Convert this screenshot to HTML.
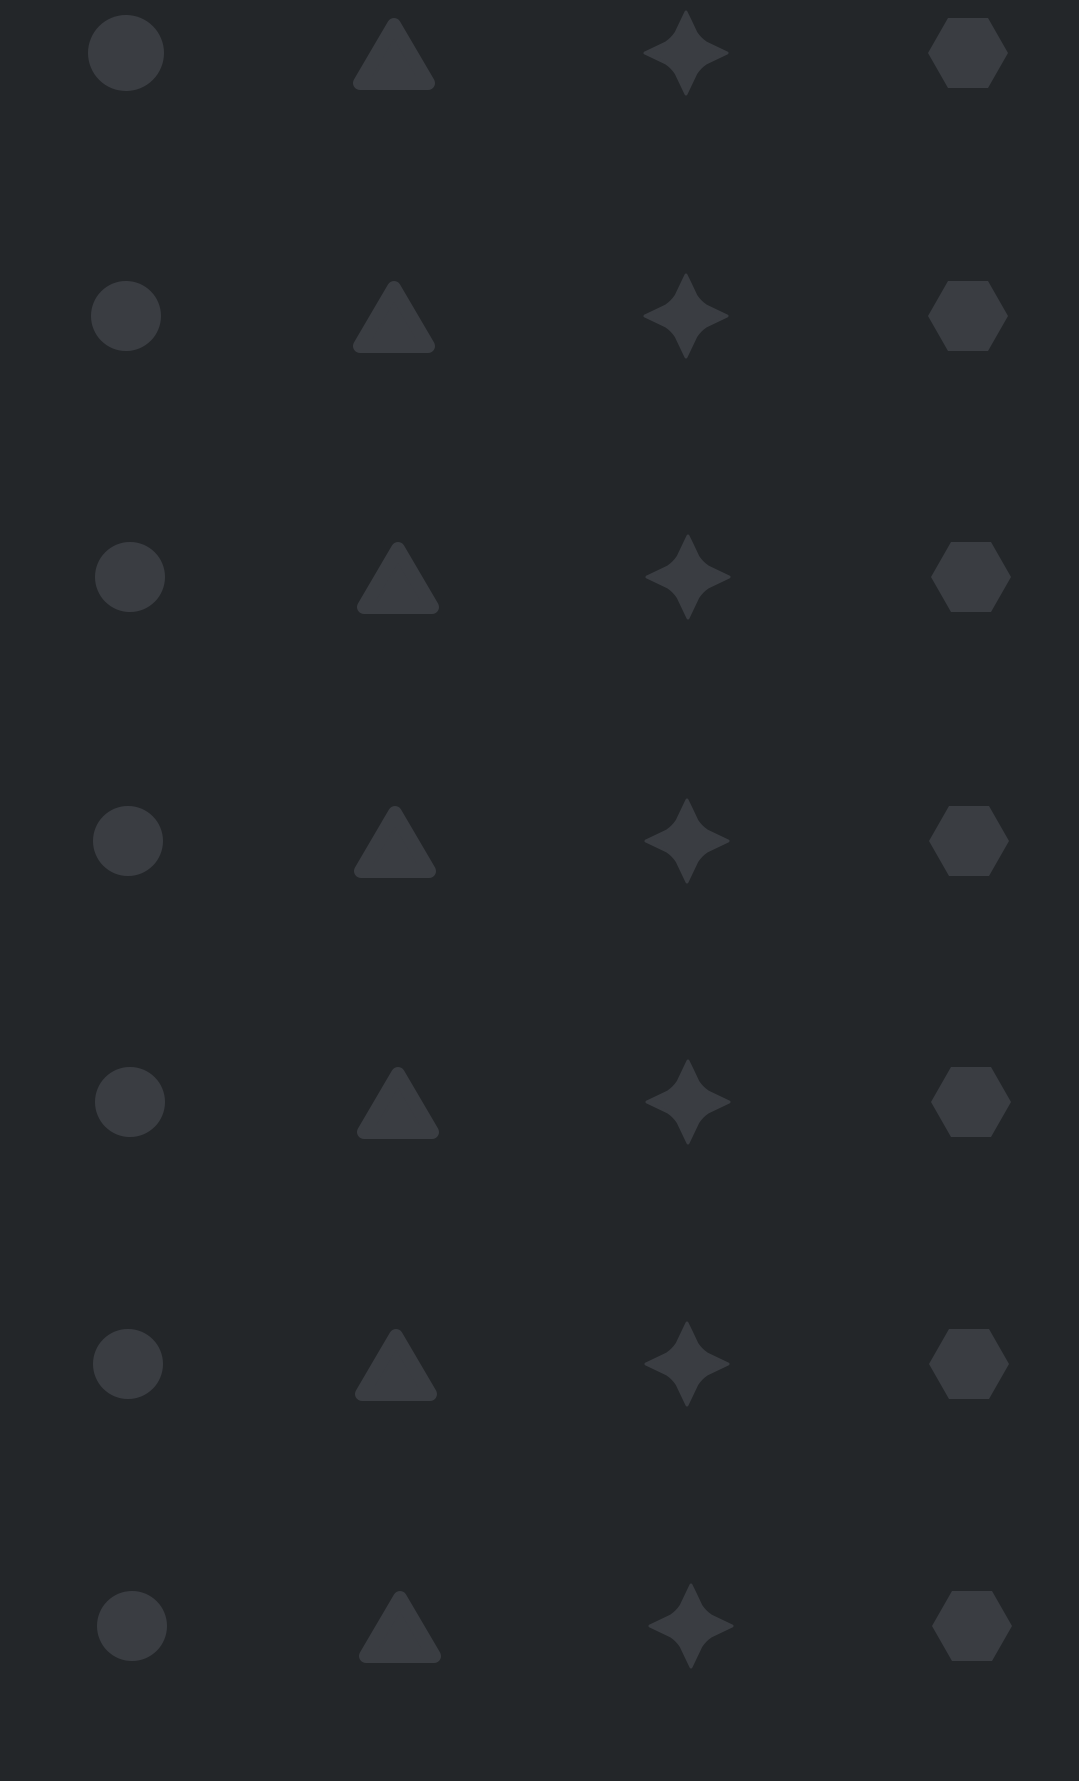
<!DOCTYPE html>
<html><head><style>
html,body{margin:0;padding:0;background:#232629;}
svg{display:block}
</style></head><body>
<svg width="1079" height="1781" viewBox="0 0 1079 1781" xmlns="http://www.w3.org/2000/svg">
<rect width="1079" height="1781" fill="#232629"/>
<defs>
<g id="tri"><polygon points="0,-28 -34,30 34,30" fill="#3a3d42" stroke="#3a3d42" stroke-width="14" stroke-linejoin="round"/></g>
<g id="star"><path d="M0,-41 Q4,-33 10,-20 Q14,-14 20,-10 L41,0 L20,10 Q14,14 10,20 L0,41 L-10,20 Q-14,14 -20,10 L-41,0 L-20,-10 Q-14,-14 -10,-20 Z" fill="#3a3d42" stroke="#3a3d42" stroke-width="3" stroke-linejoin="round"/></g>
<g id="hex"><polygon points="-40,0 -20,-35 20,-35 40,0 20,35 -20,35" fill="#3a3d42"/></g>
</defs>
<g fill="#3a3d42">
<circle cx="126" cy="53" r="38"/>
<use href="#tri" x="394" y="53"/><use href="#star" x="686" y="53"/><use href="#hex" x="968" y="53"/>

<circle cx="126" cy="316" r="35"/>
<use href="#tri" x="394" y="316"/><use href="#star" x="686" y="316"/><use href="#hex" x="968" y="316"/>

<circle cx="130" cy="577" r="35"/>
<use href="#tri" x="398" y="577"/><use href="#star" x="688" y="577"/><use href="#hex" x="971" y="577"/>

<circle cx="128" cy="841" r="35"/>
<use href="#tri" x="395" y="841"/><use href="#star" x="687" y="841"/><use href="#hex" x="969" y="841"/>

<circle cx="130" cy="1102" r="35"/>
<use href="#tri" x="398" y="1102"/><use href="#star" x="688" y="1102"/><use href="#hex" x="971" y="1102"/>

<circle cx="128" cy="1364" r="35"/>
<use href="#tri" x="396" y="1364"/><use href="#star" x="687" y="1364"/><use href="#hex" x="969" y="1364"/>

<circle cx="132" cy="1626" r="35"/>
<use href="#tri" x="400" y="1626"/><use href="#star" x="691" y="1626"/><use href="#hex" x="972" y="1626"/>
</g>
</svg>
</body></html>
